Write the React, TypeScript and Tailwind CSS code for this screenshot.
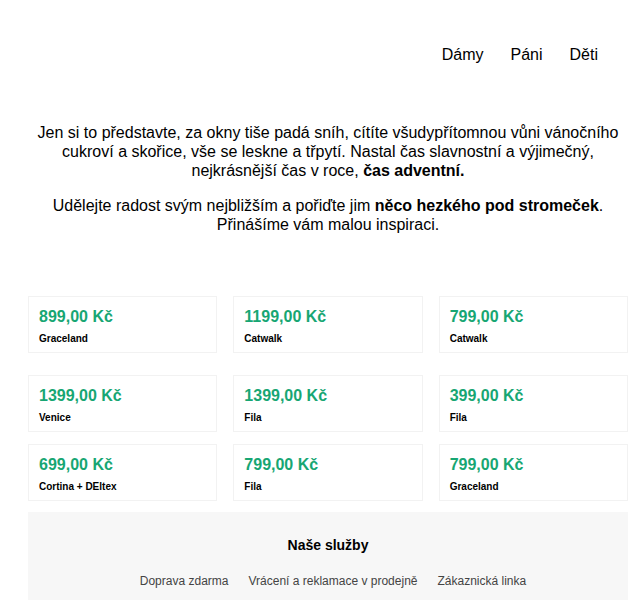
import React from 'react';

type Product = { price: string; name: string };

const FIRST_ROW: Product[] = [
  { price: '899,00 Kč', name: 'Graceland' },
  { price: '1199,00 Kč', name: 'Catwalk' },
  { price: '799,00 Kč', name: 'Catwalk' },
];

const MORE: Product[] = [
  { price: '1399,00 Kč', name: 'Venice' },
  { price: '1399,00 Kč', name: 'Fila' },
  { price: '399,00 Kč', name: 'Fila' },
  { price: '699,00 Kč', name: 'Cortina + DEltex' },
  { price: '799,00 Kč', name: 'Fila' },
  { price: '799,00 Kč', name: 'Graceland' },
];

const SERVICES = ['Doprava zdarma', 'Vrácení a reklamace v prodejně', 'Zákaznická linka'];

const ProductCard: React.FC<{ product: Product }> = ({ product }) => (
  <div className="border border-[#f2f2f2] bg-white pt-[10px] pb-[7px] px-[10px]">
    <div className="text-[16px] leading-[19px] font-bold text-[#17a673]">{product.price}</div>
    <div className="mt-[7px] text-[10px] leading-[12px] font-bold text-black">{product.name}</div>
  </div>
);

export default function App() {
  return (
    <div className="min-h-[600px] bg-white text-black font-['Liberation_Sans',Arial,sans-serif]">
      <nav className="flex justify-end gap-[27px] pt-[43px] pr-[42px] text-[16px] leading-[24px]">
        <a>Dámy</a>
        <a>Páni</a>
        <a>Děti</a>
      </nav>

      <div className="ml-[28px] w-[600px]">
        <section className="mt-[56px] text-center text-[16px] leading-[19px]">
          <p>
            Jen si to představte, za okny tiše padá sníh, cítíte všudypřítomnou vůni vánočního cukroví a
            skořice, vše se leskne a třpytí. Nastal čas slavnostní a výjimečný, nejkrásnější čas v roce,{' '}
            <strong>čas adventní.</strong>
          </p>
          <p className="mt-4">
            Udělejte radost svým nejbližším a pořiďte jim <strong>něco hezkého pod stromeček</strong>.
            <br />
            Přinášíme vám malou inspiraci.
          </p>
        </section>

        <div className="mt-[62px] grid grid-cols-3 gap-4">
          {FIRST_ROW.map((p, i) => (
            <ProductCard key={i} product={p} />
          ))}
        </div>

        <div className="mt-[22px] grid grid-cols-3 gap-x-4 gap-y-3">
          {MORE.map((p, i) => (
            <ProductCard key={i} product={p} />
          ))}
        </div>

        <footer className="mt-[11px] bg-[#f7f7f7] pt-[25px] pb-6 text-center">
          <h2 className="text-[14px] leading-[17px] font-bold">Naše služby</h2>
          <ul className="mt-[20px] flex justify-center gap-5 pl-[10px] text-[12px] leading-[14px] text-[#444]">
            {SERVICES.map(s => (
              <li key={s}>{s}</li>
            ))}
          </ul>
        </footer>
      </div>
    </div>
  );
}
